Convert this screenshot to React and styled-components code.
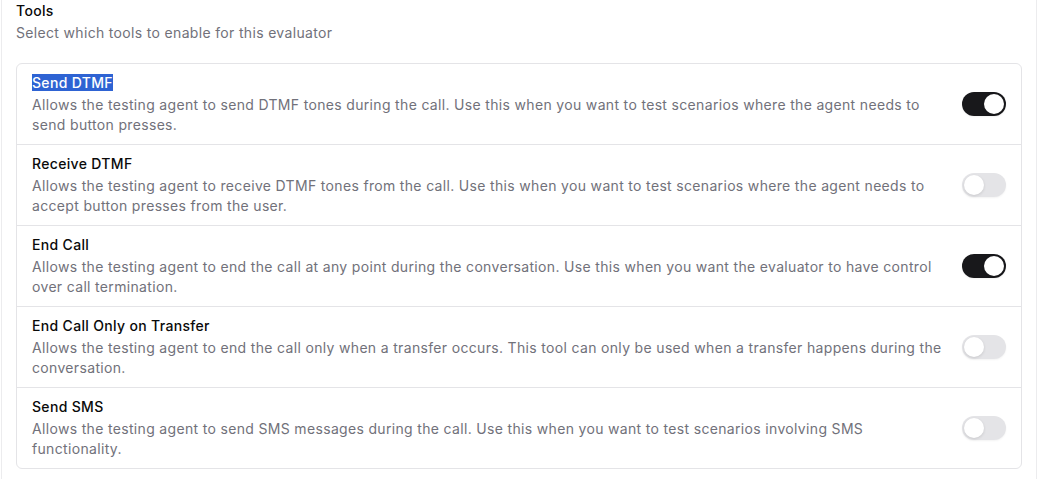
import React, { useState } from 'react'
import styled, { createGlobalStyle } from 'styled-components'

const GlobalStyle = createGlobalStyle`
  * { box-sizing: border-box; }
  html, body {
    margin: 0;
    padding: 0;
    background: #ffffff;
    font-family: Inter, "Noto Sans", "Liberation Sans", sans-serif;
    letter-spacing: 0.33px;
    -webkit-font-smoothing: antialiased;
  }
`

// Panel with faint side borders
const Panel = styled.div`
  margin-left: 1px;
  width: 1036px;
  min-height: 479px;
  padding: 1px 14px 0;
  border-left: 1px solid #ececee;
  border-right: 1px solid #ececee;
`
const Heading = styled.div`
  font-size: 14px;
  line-height: 20px;
  font-weight: 500;
  color: #0a0a0a;
`
const SubHeading = styled.div`
  margin-top: 2px;
  font-size: 14px;
  line-height: 20px;
  color: #71717a;
`

// Card with the list of tools
const Card = styled.div`
  margin-top: 20px;
  border: 1px solid #e4e4e7;
  border-radius: 6px;
  overflow: hidden;
`
const Row = styled.div`
  display: flex;
  align-items: center;
  gap: 20px;
  height: 81px;
  padding: 9px 15px;
  & + & {
    border-top: 1px solid #e4e4e7;
  }
  &:first-child {
    height: 80px;
  }
`
const TextBlock = styled.div`
  flex: 1;
  min-width: 0;
`
const Title = styled.div`
  font-size: 14px;
  line-height: 20px;
  font-weight: 500;
  color: #0a0a0a;
`
const Selected = styled.span`
  background: #2e63d3;
  color: #ffffff;
`
const Description = styled.div`
  margin-top: 2px;
  font-size: 14px;
  line-height: 20px;
  color: #71717a;
`

// Switch
const Track = styled.button`
  flex: none;
  position: relative;
  width: 44px;
  height: 24px;
  padding: 0;
  border: none;
  border-radius: 12px;
  cursor: pointer;
  background: ${(p) => (p.$on ? '#18181b' : '#e4e4e7')};
  box-shadow: 0 1px 2px rgba(0, 0, 0, 0.05);
`
const Knob = styled.span`
  position: absolute;
  top: 2px;
  left: ${(p) => (p.$on ? '22px' : '2px')};
  width: 20px;
  height: 20px;
  border-radius: 50%;
  background: #ffffff;
  box-shadow: 0 1px 3px rgba(0, 0, 0, 0.12);
  transition: left 0.15s ease;
`

const Switch = ({ on, onToggle }) => (
  <Track $on={on} onClick={onToggle} role='switch' aria-checked={on}>
    <Knob $on={on} />
  </Track>
)

const initialTools = [
  {
    id: 'send-dtmf',
    title: 'Send DTMF',
    selected: true,
    description:
      'Allows the testing agent to send DTMF tones during the call. Use this when you want to test scenarios where the agent needs to send button presses.',
    enabled: true,
  },
  {
    id: 'receive-dtmf',
    title: 'Receive DTMF',
    description:
      'Allows the testing agent to receive DTMF tones from the call. Use this when you want to test scenarios where the agent needs to accept button presses from the user.',
    enabled: false,
  },
  {
    id: 'end-call',
    title: 'End Call',
    description:
      'Allows the testing agent to end the call at any point during the conversation. Use this when you want the evaluator to have control over call termination.',
    enabled: true,
  },
  {
    id: 'end-call-transfer',
    title: 'End Call Only on Transfer',
    description:
      'Allows the testing agent to end the call only when a transfer occurs. This tool can only be used when a transfer happens during the conversation.',
    enabled: false,
  },
  {
    id: 'send-sms',
    title: 'Send SMS',
    description:
      'Allows the testing agent to send SMS messages during the call. Use this when you want to test scenarios involving SMS functionality.',
    enabled: false,
  },
]

const App = () => {
  const [tools, setTools] = useState(initialTools)

  const toggle = (id) =>
    setTools((prev) =>
      prev.map((t) => (t.id === id ? { ...t, enabled: !t.enabled } : t))
    )

  return (
    <>
      <GlobalStyle />
      <Panel>
        <Heading>Tools</Heading>
        <SubHeading>Select which tools to enable for this evaluator</SubHeading>
        <Card>
          {tools.map((tool) => (
            <Row key={tool.id}>
              <TextBlock>
                <Title>
                  {tool.selected ? <Selected>{tool.title}</Selected> : tool.title}
                </Title>
                <Description>{tool.description}</Description>
              </TextBlock>
              <Switch on={tool.enabled} onToggle={() => toggle(tool.id)} />
            </Row>
          ))}
        </Card>
      </Panel>
    </>
  )
}

export default App
